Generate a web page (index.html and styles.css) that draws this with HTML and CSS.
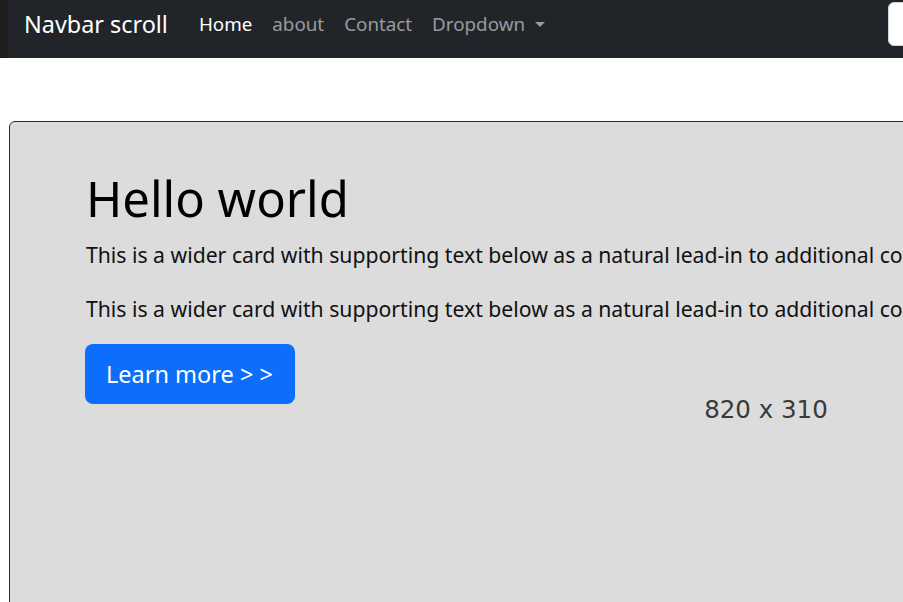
FILE: index.html
```html
<!DOCTYPE html>
<html lang="en">
<head>
<meta charset="utf-8">
<title>Navbar scroll</title>
<link rel="stylesheet" href="styles.css">
</head>
<body>
<header class="navbar">
  <a class="brand" href="#">Navbar scroll</a>
  <nav class="nav-links">
    <a class="nav-link active" href="#">Home</a>
    <a class="nav-link" href="#">about</a>
    <a class="nav-link" href="#">Contact</a>
    <a class="nav-link dropdown" href="#">Dropdown <span class="caret"></span></a>
  </nav>
  <input class="search" type="search" aria-label="Search">
</header>
<main class="main">
  <section class="card">
    <div class="card-text">
      <h1 class="title">Hello world</h1>
      <p class="lead">This is a wider card with supporting text below as a natural lead-in to additional content.</p>
      <p class="lead last">This is a wider card with supporting text below as a natural lead-in to additional content.</p>
      <a class="btn" href="#">Learn more &gt; &gt;</a>
    </div>
    <div class="card-image">
      <span class="placeholder">820 x 310</span>
    </div>
  </section>
</main>
</body>
</html>
```

FILE: styles.css
```css
html, body {
  margin: 0;
  padding: 0;
  overflow: hidden;
  background: #fff;
}
body {
  font-family: "Noto Sans", "Open Sans", sans-serif;
  color: #212529;
  width: 903px;
  height: 602px;
}
.navbar {
  height: 58px;
  box-sizing: border-box;
  background: #212529;
  border-left: 8px solid #1e1e1e;
  display: flex;
  align-items: flex-start;
  padding: 2px 0 0 16px;
  white-space: nowrap;
}
.brand {
  color: #fff;
  text-decoration: none;
  font-size: 23.4px;
  line-height: 44px;
  margin-right: 21px;
}
.nav-links {
  display: flex;
}
.nav-link {
  color: rgba(255, 255, 255, 0.55);
  text-decoration: none;
  font-size: 18.8px;
  line-height: 44px;
  padding: 0 10px;
}
.nav-link.active {
  color: #fff;
}
.caret {
  display: inline-block;
  width: 0;
  height: 0;
  border-left: 5px solid transparent;
  border-right: 5px solid transparent;
  border-top: 5px solid rgba(255, 255, 255, 0.55);
  vertical-align: 4px;
  margin-left: 5px;
}
.search {
  margin-left: auto;
  margin-right: -200px;
  width: 215px;
  height: 44px;
  box-sizing: border-box;
  border: 1px solid #ced4da;
  border-radius: 6px;
  background: #fff;
}
.main {
  padding: 63px 0 0 9px;
}
.card {
  width: 1200px;
  height: 600px;
  box-sizing: border-box;
  background: #dcdcdc;
  border: 1px solid #2b2b2b;
  border-radius: 6px;
  display: flex;
  padding: 46px 0 0 76px;
  white-space: nowrap;
}
.card-text {
  width: 540px;
}
.title {
  font-size: 49px;
  font-weight: 400;
  line-height: 60px;
  margin: 0 0 12px;
  color: #000;
}
.lead {
  font-size: 21.2px;
  line-height: 30px;
  margin: 0 0 24px;
  color: #111;
}
.lead.last {
  margin-bottom: 20px;
}
.btn {
  display: inline-block;
  background: #0d6efd;
  color: #fff;
  text-decoration: none;
  font-size: 23.5px;
  line-height: 60px;
  padding: 0 22px 0 21px;
  border-radius: 8px;
  margin-left: -1px;
}
.card-image {
  width: 280px;
  padding-top: 228px;
  text-align: center;
}
.placeholder {
  font-family: "DejaVu Sans", sans-serif;
  font-size: 24.5px;
  line-height: 28px;
  color: #3a3a3a;
}
```
